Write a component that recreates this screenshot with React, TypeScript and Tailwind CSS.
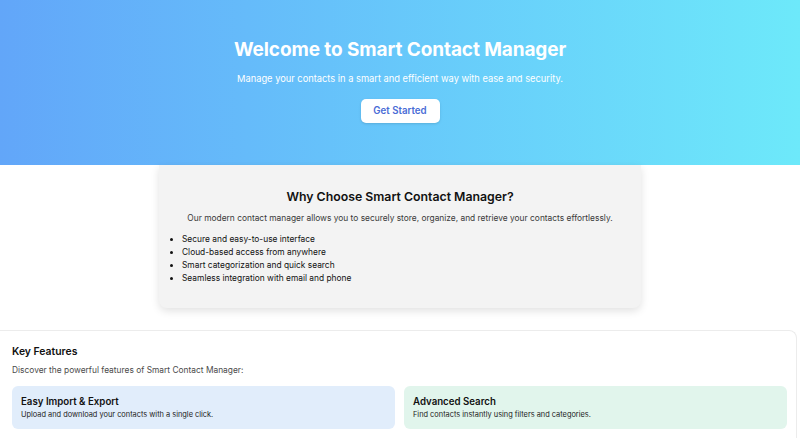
import React from "react";

const features = [
  { t: "Easy Import & Export", d: "Upload and download your contacts with a single click.", c: "bg-[#e1edfb]" },
  { t: "Advanced Search", d: "Find contacts instantly using filters and categories.", c: "bg-[#e1f5ec]" },
  { t: "Smart Groups", d: "Organize contacts into groups for quick access.", c: "bg-[#fefbe6]" },
  { t: "Secure Storage", d: "Your data is encrypted and safely stored.", c: "bg-[#fdebeb]" },
];

export default function App() {
  return (
    <div className="h-[438px] bg-white overflow-hidden" style={{ fontFamily: "Inter, 'Noto Sans', sans-serif" }}>
      <section className="h-[165px] bg-gradient-to-r from-[#62a6f9] to-[#6de9fa] flex flex-col items-center pt-[38px] text-white">
        <h1 className="text-[19px] leading-[24px] font-bold tracking-[-0.1px]">Welcome to Smart Contact Manager</h1>
        <p className="mt-[8px] text-[9.3px] leading-[18px] text-white">Manage your contacts in a smart and efficient way with ease and security.</p>
        <button className="mt-[11px] h-[24px] w-[79px] rounded-[5px] bg-white text-[9.7px] font-semibold text-[#4a6cd6] shadow-sm">Get Started</button>
      </section>
      <section className="mx-auto w-[482px] h-[143px] bg-[#f3f3f3] rounded-b-lg shadow-[0_3px_8px_rgba(0,0,0,0.12)] pt-[21px] px-[15px]">
        <h2 className="text-center text-[12.3px] leading-[22px] font-semibold text-[#111]">Why Choose Smart Contact Manager?</h2>
        <p className="mt-[3px] text-center text-[8.4px] leading-[14px] text-[#3a3a3a]">Our modern contact manager allows you to securely store, organize, and retrieve your contacts effortlessly.</p>
        <ul className="mt-[8px] list-disc pl-[8px] text-[8.4px] leading-[13px] text-[#111]">
          <li>Secure and easy-to-use interface</li>
          <li>Cloud-based access from anywhere</li>
          <li>Smart categorization and quick search</li>
          <li>Seamless integration with email and phone</li>
        </ul>
      </section>
      <section className="mt-[22px] w-[797px] border-t border-r border-[#ececec] rounded-tr-lg pl-3 pr-[9px] pt-[13px]">
        <h3 className="text-[10.4px] leading-[16px] font-semibold text-[#111]">Key Features</h3>
        <p className="mt-[3px] text-[8.4px] leading-[14px] text-[#4b4b4b]">Discover the powerful features of Smart Contact Manager:</p>
        <div className="mt-[9px] grid grid-cols-2 gap-[9px]">
          {features.map((f) => (
            <div key={f.t} className={`${f.c} rounded-md h-[43px] px-[9px] pt-[8px]`}>
              <div className="text-[9.7px] leading-[15px] font-semibold text-[#111]">{f.t}</div>
              <div className="text-[7.4px] leading-[12px] text-[#222]">{f.d}</div>
            </div>
          ))}
        </div>
      </section>
    </div>
  );
}
